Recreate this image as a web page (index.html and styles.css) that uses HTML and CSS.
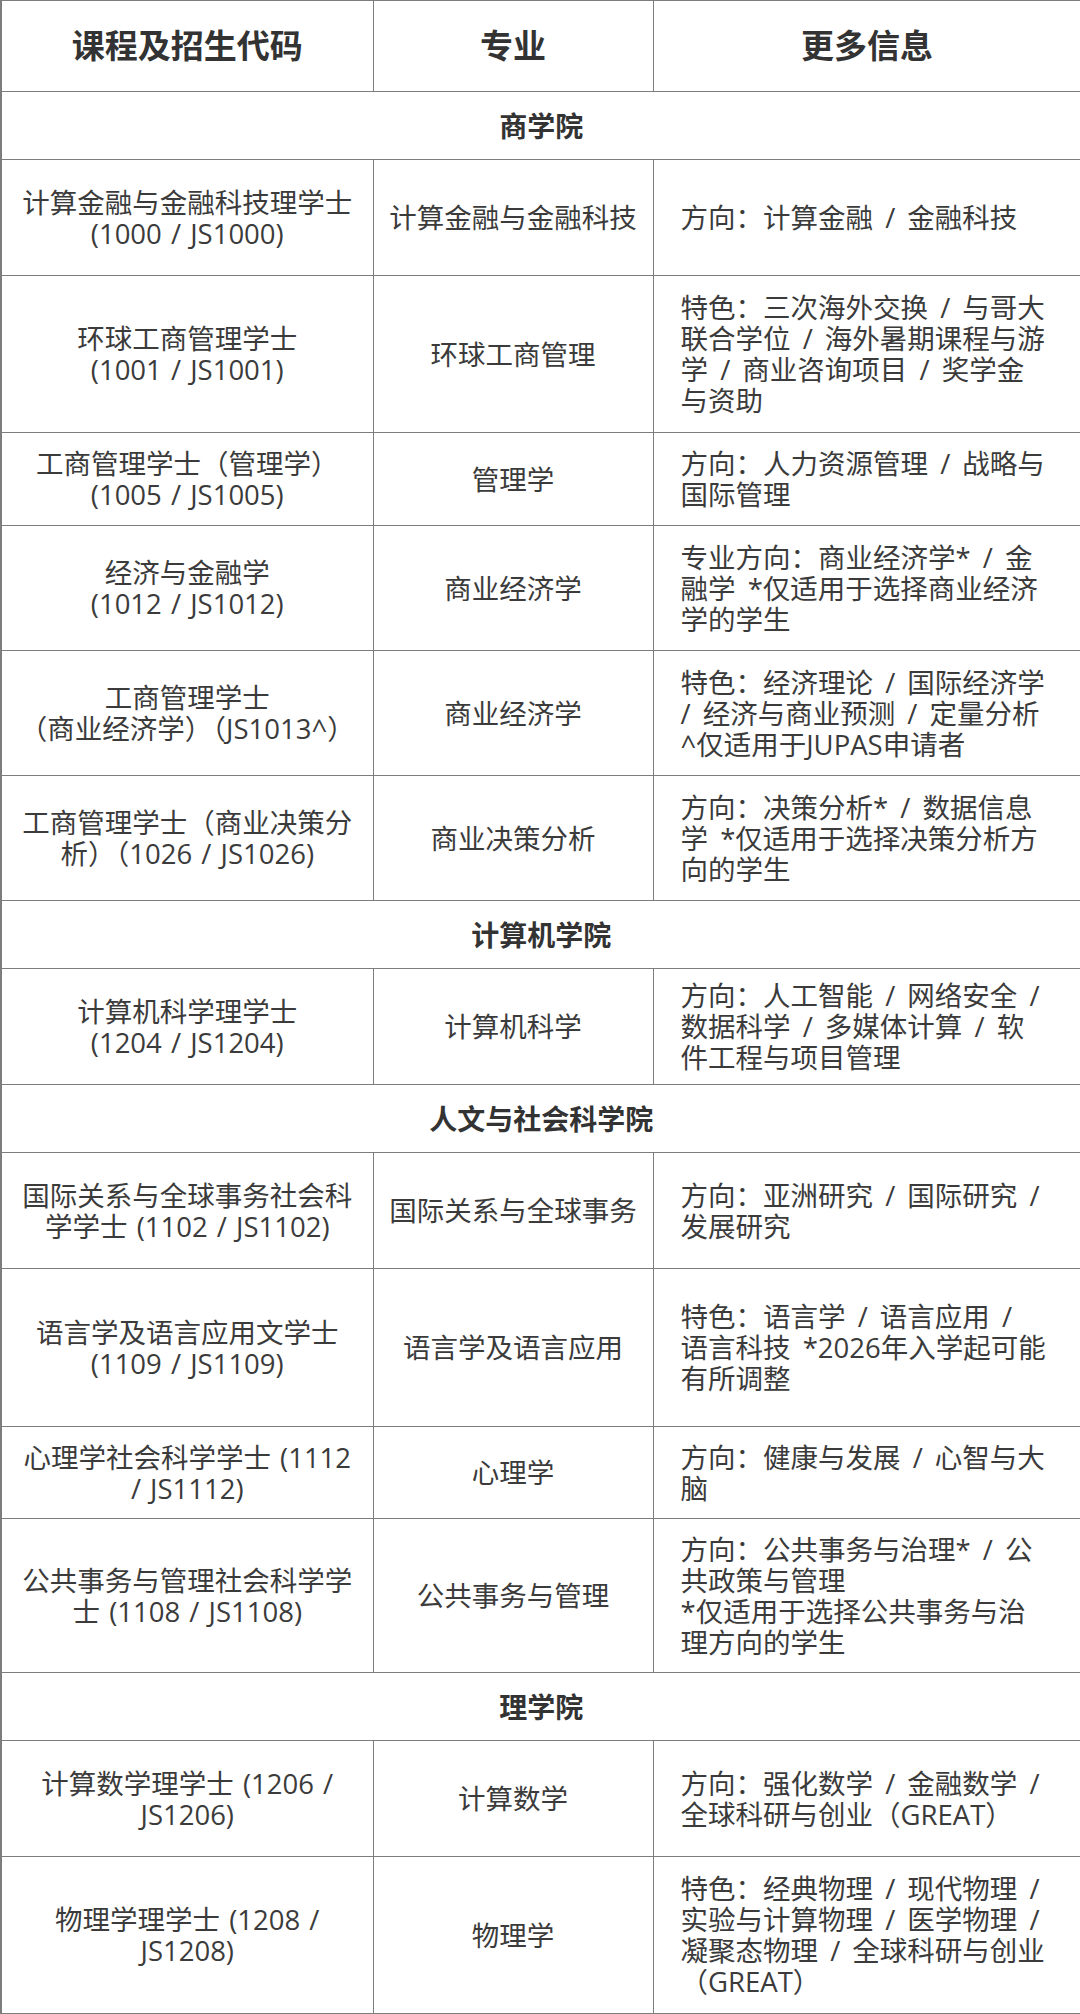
FILE: index.html
```html
<!DOCTYPE html>
<html lang="zh-CN">
<head>
<meta charset="utf-8">
<title>课程及招生代码</title>
<link rel="stylesheet" href="styles.css">
</head>
<body>
<table class="programmes">
  <colgroup>
    <col class="col-code">
    <col class="col-major">
    <col class="col-info">
  </colgroup>
  <thead>
    <tr class="row-head">
      <th>课程及招生代码</th>
      <th>专业</th>
      <th>更多信息</th>
    </tr>
  </thead>
  <tbody>
    <tr class="row-school"><td colspan="3">商学院</td></tr>
    <tr class="h116">
      <td class="code">计算金融与金融科技理学士<br>(1000 / JS1000)</td>
      <td class="major">计算金融与金融科技</td>
      <td class="info">方向：计算金融 / 金融科技</td>
    </tr>
    <tr class="h157">
      <td class="code">环球工商管理学士<br>(1001 / JS1001)</td>
      <td class="major">环球工商管理</td>
      <td class="info">特色：三次海外交换 / 与哥大<br>联合学位 / 海外暑期课程与游<br>学 / 商业咨询项目 / 奖学金<br>与资助</td>
    </tr>
    <tr class="h93">
      <td class="code">工商管理学士（管理学）<br>(1005 / JS1005)</td>
      <td class="major">管理学</td>
      <td class="info">方向：人力资源管理 / 战略与<br>国际管理</td>
    </tr>
    <tr class="h125">
      <td class="code">经济与金融学<br>(1012 / JS1012)</td>
      <td class="major">商业经济学</td>
      <td class="info">专业方向：商业经济学* / 金<br>融学 *仅适用于选择商业经济<br>学的学生</td>
    </tr>
    <tr class="h125">
      <td class="code">工商管理学士<br>（商业经济学）（JS1013^）</td>
      <td class="major">商业经济学</td>
      <td class="info">特色：经济理论 / 国际经济学<br>/ 经济与商业预测 / 定量分析<br>^仅适用于JUPAS申请者</td>
    </tr>
    <tr class="h125">
      <td class="code">工商管理学士（商业决策分<br>析）（1026 / JS1026)</td>
      <td class="major">商业决策分析</td>
      <td class="info">方向：决策分析* / 数据信息<br>学 *仅适用于选择决策分析方<br>向的学生</td>
    </tr>
    <tr class="row-school"><td colspan="3">计算机学院</td></tr>
    <tr class="h116">
      <td class="code">计算机科学理学士<br>(1204 / JS1204)</td>
      <td class="major">计算机科学</td>
      <td class="info">方向：人工智能 / 网络安全 /<br>数据科学 / 多媒体计算 / 软<br>件工程与项目管理</td>
    </tr>
    <tr class="row-school"><td colspan="3">人文与社会科学院</td></tr>
    <tr class="h116">
      <td class="code">国际关系与全球事务社会科<br>学学士 (1102 / JS1102)</td>
      <td class="major">国际关系与全球事务</td>
      <td class="info">方向：亚洲研究 / 国际研究 /<br>发展研究</td>
    </tr>
    <tr class="h158">
      <td class="code">语言学及语言应用文学士<br>(1109 / JS1109)</td>
      <td class="major">语言学及语言应用</td>
      <td class="info">特色：语言学 / 语言应用 /<br>语言科技 *2026年入学起可能<br>有所调整</td>
    </tr>
    <tr class="h92">
      <td class="code">心理学社会科学学士 (1112<br>/ JS1112)</td>
      <td class="major">心理学</td>
      <td class="info">方向：健康与发展 / 心智与大<br>脑</td>
    </tr>
    <tr class="h154">
      <td class="code">公共事务与管理社会科学学<br>士 (1108 / JS1108)</td>
      <td class="major">公共事务与管理</td>
      <td class="info">方向：公共事务与治理* / 公<br>共政策与管理<br>*仅适用于选择公共事务与治<br>理方向的学生</td>
    </tr>
    <tr class="row-school"><td colspan="3">理学院</td></tr>
    <tr class="h116">
      <td class="code">计算数学理学士 (1206 /<br>JS1206)</td>
      <td class="major">计算数学</td>
      <td class="info">方向：强化数学 / 金融数学 /<br>全球科研与创业（GREAT）</td>
    </tr>
    <tr class="h157">
      <td class="code">物理学理学士 (1208 /<br>JS1208)</td>
      <td class="major">物理学</td>
      <td class="info">特色：经典物理 / 现代物理 /<br>实验与计算物理 / 医学物理 /<br>凝聚态物理 / 全球科研与创业<br>（GREAT）</td>
    </tr>
  </tbody>
</table>
</body>
</html>
```

FILE: styles.css
```css
html, body {
  margin: 0;
  padding: 0;
  background: #ffffff;
}

body {
  font-family: "Open Sans", "Noto Sans CJK SC", sans-serif;
  color: #3b3b3b;
}

.programmes {
  width: 1080px;
  border-collapse: collapse;
  table-layout: fixed;
  border: 1px solid #7d7d7d;
  border-left-width: 2px;
}

.col-code { width: 372px; }
.col-major { width: 280px; }
.col-info { width: 428px; }

.programmes th,
.programmes td {
  border: 1px solid #7d7d7d;
  padding: 0;
  vertical-align: middle;
  white-space: nowrap;
}

.programmes .row-head { height: 91px; }

.programmes .row-head th {
  font-size: 33px;
  font-weight: 700;
  color: #333333;
  text-align: center;
  line-height: 40px;
}

.programmes .row-school { height: 68px; }

.programmes .row-school td {
  font-size: 28px;
  font-weight: 700;
  color: #333333;
  text-align: center;
  line-height: 34px;
}

.programmes .code,
.programmes .major,
.programmes .info {
  font-size: 27.5px;
  line-height: 31px;
  font-weight: 400;
}

.programmes .code {
  text-align: center;
  padding: 0 8px;
  word-spacing: 2px;
}

.programmes .major {
  text-align: center;
  padding: 0 6px;
}

.programmes .info {
  text-align: left;
  padding: 0 8px 0 27px;
  word-spacing: 5px;
}

.programmes .h92 { height: 92px; }
.programmes .h93 { height: 93px; }
.programmes .h116 { height: 116px; }
.programmes .h125 { height: 125px; }
.programmes .h154 { height: 154px; }
.programmes .h157 { height: 157px; }
.programmes .h158 { height: 158px; }
```
